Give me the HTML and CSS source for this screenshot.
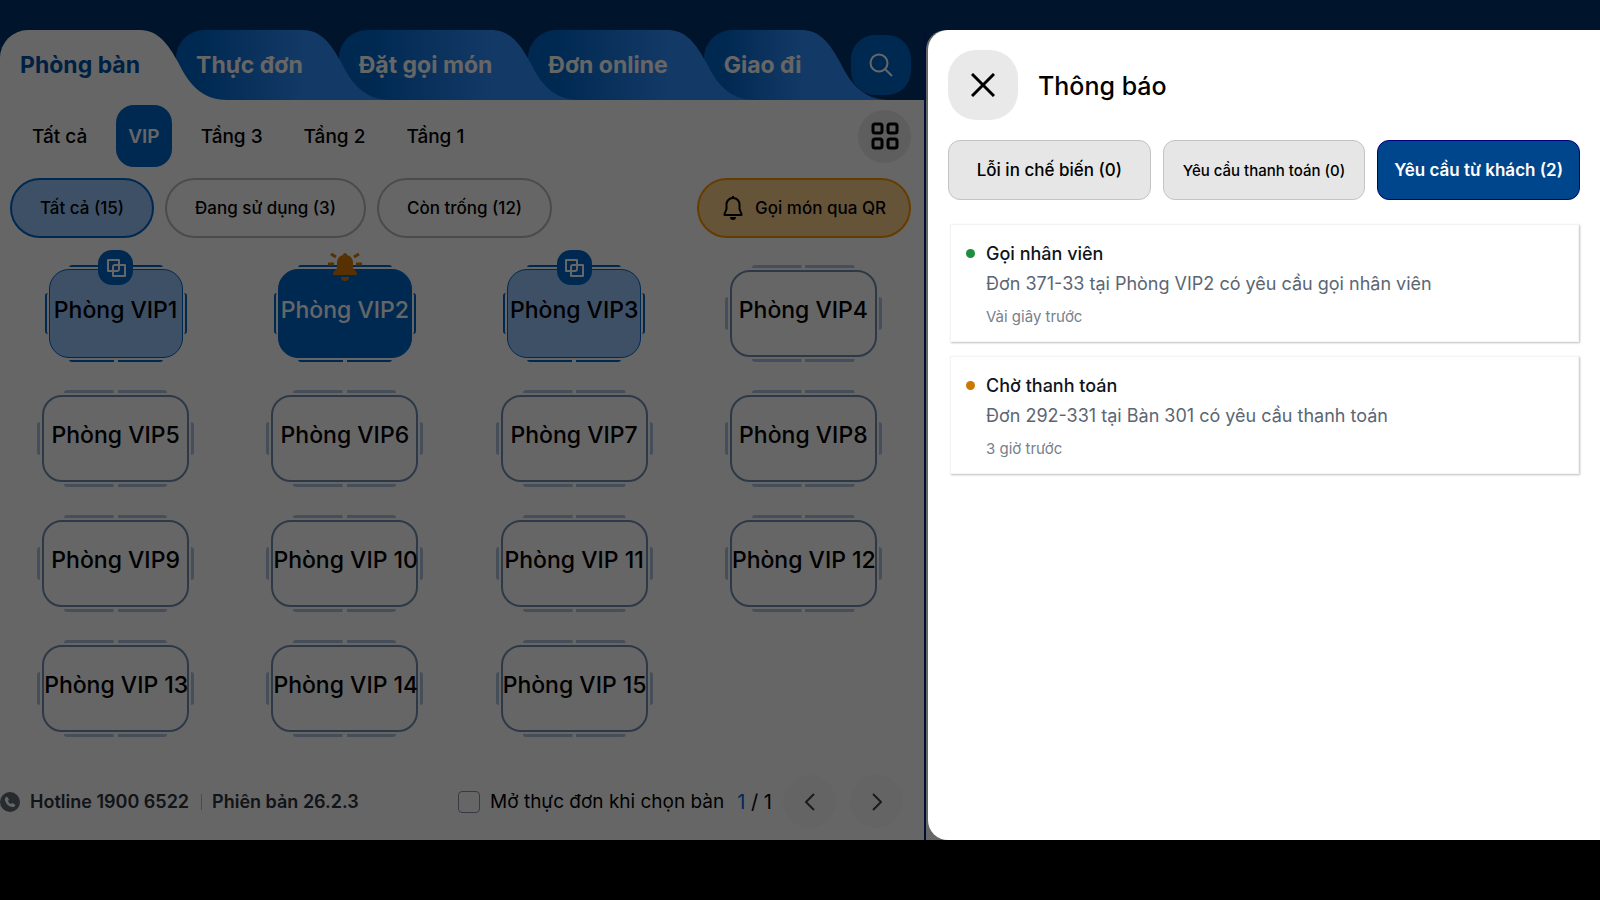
FILE: index.html
```html
<!DOCTYPE html>
<html lang="vi">
  <head>
    <meta charset="utf-8">
    <title>Phòng bàn</title>
    <link rel="stylesheet" href="styles.css">
  </head>
  <body>
    <svg class="symbols" aria-hidden="true">
      <symbol id="tail" viewBox="0 0 88 70">
        <path d="M0 0C18 0 28 14 38 32C48 52 60 70 88 70H0Z"/>
      </symbol>
      <symbol id="merge" viewBox="0 0 20 20">
        <path d="M13 7V2H2v11h5M8 7h11v11H7v-5h4a2 2 0 0 0 2-2V7M7 13V9a2 2 0 0 1 2-2" fill="none" stroke="currentColor" stroke-width="2" stroke-linejoin="round"/>
      </symbol>
    </svg>

    <div class="app">
      <main class="left">
        <nav class="tabs">
          <button class="tab active"><span>Phòng bàn</span><svg><use href="#tail"/></svg></button>
          <button class="tab"><span>Thực đơn</span><svg><use href="#tail"/></svg></button>
          <button class="tab"><span>Đặt gọi món</span><svg><use href="#tail"/></svg></button>
          <button class="tab"><span>Đơn online</span><svg><use href="#tail"/></svg></button>
          <button class="tab"><span>Giao đi</span><svg><use href="#tail"/></svg></button>
          <button class="search" aria-label="Tìm kiếm">
            <svg width="24" height="24" viewBox="0 0 24 24" fill="none" stroke="#fff" stroke-width="2">
              <circle cx="10" cy="10" r="8.500"/>
              <path d="M16 16l7 7"/>
            </svg>
          </button>
        </nav>

        <div class="content">
          <div class="areas">
            <button class="area">Tất cả</button>
            <button class="area active">VIP</button>
            <button class="area">Tầng 3</button>
            <button class="area">Tầng 2</button>
            <button class="area">Tầng 1</button>
            <button class="round view" aria-label="Kiểu hiển thị">
              <svg width="28" height="28" viewBox="0 0 28 28" fill="none" stroke="#000" stroke-width="3">
                <rect x="2" y="2" width="9" height="9" rx="2"/>
                <rect x="17" y="2" width="9" height="9" rx="2"/>
                <rect x="2" y="17" width="9" height="9" rx="2"/>
                <rect x="17" y="17" width="9" height="9" rx="2"/>
              </svg>
            </button>
          </div>

          <div class="filters">
            <button class="filter active">Tất cả (15)</button>
            <button class="filter">Đang sử dụng (3)</button>
            <button class="filter">Còn trống (12)</button>
            <button class="filter qr">
              <svg width="20" height="24" viewBox="0 0 20 24" fill="none" stroke="#000" stroke-width="2" stroke-linejoin="round">
                <path d="M10 2c-4 0-6.500 3-6.500 6.500V13L1.500 18v1h17v-1l-2-5V8.500C16.500 5 14 2 10 2z"/>
                <path d="M10 0v2"/>
                <path d="M7 21h6a3 3 0 0 1-6 0z" fill="#000" stroke="none"/>
              </svg>
              Gọi món qua QR
            </button>
          </div>

          <div class="tables">
            <button class="table busy"><i class="seats"></i><span class="name">Phòng VIP1</span><i class="badge"><svg width="20" height="20"><use href="#merge"/></svg></i></button>
            <button class="table busy calling"><i class="seats"></i><span class="name">Phòng VIP2</span>
              <svg class="bell" width="34" height="28" viewBox="0 0 34 28" fill="#d97b06">
                <path d="M17 0a2 2 0 0 1 2 2c4 1 6 4 6 8v5l4 5v2H5v-2l4-5v-5c0-4 2-7 6-8a2 2 0 0 1 2-2z"/>
                <path d="M13 24h8a4 4 0 0 1-8 0z"/>
                <path d="M3 1l5 3M31 1l-5 3M0 11h6M34 11h-6" stroke="#d97b06" stroke-width="3"/>
              </svg>
            </button>
            <button class="table busy"><i class="seats"></i><span class="name">Phòng VIP3</span><i class="badge"><svg width="20" height="20"><use href="#merge"/></svg></i></button>
            <button class="table"><i class="seats"></i><span class="name">Phòng VIP4</span></button>
            <button class="table"><i class="seats"></i><span class="name">Phòng VIP5</span></button>
            <button class="table"><i class="seats"></i><span class="name">Phòng VIP6</span></button>
            <button class="table"><i class="seats"></i><span class="name">Phòng VIP7</span></button>
            <button class="table"><i class="seats"></i><span class="name">Phòng VIP8</span></button>
            <button class="table"><i class="seats"></i><span class="name">Phòng VIP9</span></button>
            <button class="table"><i class="seats"></i><span class="name">Phòng VIP 10</span></button>
            <button class="table"><i class="seats"></i><span class="name">Phòng VIP 11</span></button>
            <button class="table"><i class="seats"></i><span class="name">Phòng VIP 12</span></button>
            <button class="table"><i class="seats"></i><span class="name">Phòng VIP 13</span></button>
            <button class="table"><i class="seats"></i><span class="name">Phòng VIP 14</span></button>
            <button class="table"><i class="seats"></i><span class="name">Phòng VIP 15</span></button>
          </div>

          <footer class="footer">
            <svg width="20" height="20" viewBox="0 0 20 20">
              <circle cx="10" cy="10" r="10" fill="#5f6b76"/>
              <path d="M5 6l2-1.500 2 3-1 1.500c.6 1.400 1.600 2.400 3 3l1.500-1 3 2-1.500 2c-5 1-10-5-9-9z" fill="#fff"/>
            </svg>
            <span class="info">Hotline 1900 6522</span>
            <span class="line"></span>
            <span class="info">Phiên bản 26.2.3</span>
            <label class="open-menu"><input type="checkbox"> Mở thực đơn khi chọn bàn</label>
            <span class="page"><b>1</b> / 1</span>
            <button class="round" aria-label="Trang trước">
              <svg width="10" height="18" viewBox="0 0 10 18"><path d="M9 1L1 9l8 8"/></svg>
            </button>
            <button class="round" aria-label="Trang sau">
              <svg width="10" height="18" viewBox="0 0 10 18"><path d="M1 1l8 8-8 8"/></svg>
            </button>
          </footer>
        </div>
      </main>
      <section class="order"></section>

      <div class="overlay"></div>

      <aside class="drawer">
        <header class="drawer-head">
          <button class="close" aria-label="Đóng">
            <svg width="24" height="24" viewBox="0 0 24 24" stroke="#000" stroke-width="3"><path d="M1 1l22 22M23 1L1 23"/></svg>
          </button>
          <h1>Thông báo</h1>
        </header>
        <div class="kinds">
          <button class="kind">Lỗi in chế biến (0)</button>
          <button class="kind small">Yêu cầu thanh toán (0)</button>
          <button class="kind active">Yêu cầu từ khách (2)</button>
        </div>
        <div class="notices">
          <article class="notice">
            <i class="dot green"></i>
            <div>
              <h2>Gọi nhân viên</h2>
              <p>Đơn 371-33 tại Phòng VIP2 có yêu cầu gọi nhân viên</p>
              <time>Vài giây trước</time>
            </div>
          </article>
          <article class="notice">
            <i class="dot orange"></i>
            <div>
              <h2>Chờ thanh toán</h2>
              <p>Đơn 292-331 tại Bàn 301 có yêu cầu thanh toán</p>
              <time>3 giờ trước</time>
            </div>
          </article>
        </div>
      </aside>
    </div>
  </body>
</html>
```

FILE: styles.css
```css
* {box-sizing: border-box;}
body {margin: 0; background: #000; font-family: Inter, "Noto Sans", sans-serif; color: #000;}
button {margin: 0; padding: 0; border: 0; background: none; font: inherit; color: inherit;}
h1, h2, p {margin: 0;}
.symbols {position: absolute; width: 0; height: 0;}

.app {
  position: relative;
  display: flex;
  min-height: calc(100vh - 60px);
  padding-top: 30px;
  background: #00326b;
}
.left {
  isolation: isolate;
  flex: 1;
  display: flex;
  flex-direction: column;
  border-right: 2px solid #002680;
}
.order {width: calc(42% + 2px); background: #fff; border-radius: 20px 0 0 0;}
.overlay {position: absolute; inset: 0; background: rgba(0, 0, 0, 0.6);}

/* top tabs */
.tabs {display: flex; align-items: center; height: 70px; padding-right: 13px;}
.tab {
  position: relative;
  display: flex;
  height: 70px;
  margin-right: -52px;
  font-size: 23px;
  font-weight: 700;
  line-height: 70px;
  color: #fff;
  white-space: nowrap;
}
.tab span {
  padding-left: 20px;
  border-radius: 28px 0 0 0;
  background: linear-gradient(90deg, #0066cc 20%, #3091ff);
}
.tab svg {width: 88px; height: 70px; fill: #3091ff;}
.tab.active {color: #0050a8;}
.tab.active span {background: #fff;}
.tab.active svg {fill: #fff;}
.tab:nth-child(1) {z-index: 5;}
.tab:nth-child(2) {z-index: 4;}
.tab:nth-child(3) {z-index: 3;}
.tab:nth-child(4) {z-index: 2;}
.tab:nth-child(5) {z-index: 1;}
.search {
  display: grid;
  place-items: center;
  width: 60px;
  height: 60px;
  margin-left: auto;
  border-radius: 24px;
  background: #0066cc;
}

.content {flex: 1; display: flex; flex-direction: column; background: #fff;}
.round {
  display: grid;
  place-items: center;
  width: 53px;
  height: 53px;
  border-radius: 50%;
  background: #fafafa;
}
.areas {display: flex; align-items: center; gap: 17px; padding: 5px 13px 0 20px;}
.area {height: 62px; padding: 0 12px; border-radius: 18px; font-size: 19px; font-weight: 500;}
.area.active {background: #0066cc; color: #fff; font-weight: 600;}
.view {margin-left: auto; background: #ebebeb;}

.filters {display: flex; gap: 11px; padding: 11px 13px 0 10px;}
.filter {
  display: flex;
  align-items: center;
  gap: 12px;
  height: 60px;
  padding: 0 28px;
  border: 2px solid #bbb;
  border-radius: 30px;
  font-size: 17px;
  font-weight: 500;
}
.filter.active {border-color: #0066cc; background: #9bc8ff;}
.filter.qr {margin-left: auto; padding: 0 23px 0 24px; border-color: #ff9500; background: #ffd28f;}

/* room grid */
.tables {display: grid; grid-template-columns: repeat(4, 1fr); grid-auto-rows: 125px; padding: 13px 6px 0 1px;}
.table {
  position: relative;
  display: grid;
  place-items: center;
  place-self: center;
  width: 147px;
  height: 87px;
  border: 2px solid #7390b5;
  border-radius: 20px;
  font-size: 23px;
  font-weight: 500;
  white-space: nowrap;
}
.name {line-height: 32px; padding-bottom: 8px;}
.seats {position: absolute; inset: -7px; pointer-events: none;}
.seats::before, .seats::after {content: ""; position: absolute;}
.seats::before {
  inset: 0 27px;
  background:
    linear-gradient(#b0c4de, #b0c4de) 0 0 / calc(50% - 2px) 3px,
    linear-gradient(#b0c4de, #b0c4de) 100% 0 / calc(50% - 2px) 3px,
    linear-gradient(#b0c4de, #b0c4de) 0 100% / calc(50% - 2px) 3px,
    linear-gradient(#b0c4de, #b0c4de) 100% 100% / calc(50% - 2px) 3px;
  background-repeat: no-repeat;
  border-radius: 3px;
}
.seats::after {inset: 32px 0; border: solid #b0c4de; border-width: 0 3px; border-radius: 3px;}
.busy {width: 134px; height: 89px; border: 1px solid #0066cc; background: #9bc8ff;}
.busy .seats {inset: -5px;}
.busy .seats::before {
  inset: 0 24px;
  background:
    linear-gradient(#0066cc, #0066cc) 0 0 / calc(50% - 2px) 2px,
    linear-gradient(#0066cc, #0066cc) 100% 0 / calc(50% - 2px) 2px,
    linear-gradient(#0066cc, #0066cc) 0 100% / calc(50% - 2px) 2px,
    linear-gradient(#0066cc, #0066cc) 100% 100% / calc(50% - 2px) 2px;
  background-repeat: no-repeat;
}
.busy .seats::after {inset: 28px 0; border-color: #0066cc; border-width: 0 2px;}
.calling {background: #0066cc; color: #fff;}
.badge {
  position: absolute;
  top: -20px;
  display: grid;
  place-items: center;
  width: 35px;
  height: 35px;
  border-radius: 14px;
  background: #0066cc;
  color: #fff;
}
.bell {position: absolute; top: -17px;}

.footer {display: flex; align-items: center; margin-top: auto; padding: 0 21px 12px 0;}
.info {margin-left: 10px; font-size: 18px; font-weight: 600; color: #2b333c;}
.line {width: 1px; height: 16px; margin-left: 12px; background: #bbb;}
.open-menu {display: flex; align-items: center; gap: 10px; margin-left: auto; font-size: 19px;}
.open-menu input {
  appearance: none;
  width: 22px;
  height: 22px;
  margin: 0;
  border: 1px solid #8b95a3;
  border-radius: 4px;
}
.page {margin-left: 13px; font-size: 20px;}
.page b {font-weight: 400; color: #0066e0;}
.footer .round {margin-left: 14px;}
.footer .page + .round {margin-left: 11px;}
.footer .round svg {fill: none; stroke: #444; stroke-width: 2;}

/* notification drawer */
.drawer {
  position: absolute;
  top: 30px;
  right: 0;
  bottom: 0;
  width: 42%;
  padding: 20px;
  border-radius: 20px 0 0 20px;
  background: #fff;
}
.drawer-head {display: flex; align-items: center; gap: 20px;}
.drawer-head h1 {padding-top: 2px; font-size: 25px; font-weight: 500;}
.close {display: grid; place-items: center; width: 70px; height: 70px; border-radius: 28px; background: #e9e9e9;}
.kinds {display: grid; grid-template-columns: repeat(3, 1fr); gap: 12px; margin-top: 20px;}
.kind {
  height: 60px;
  border: 1px solid #c4c4c4;
  border-radius: 12px;
  background: #e6e6e6;
  font-size: 17px;
  font-weight: 500;
  white-space: nowrap;
}
.kind.small {font-size: 15px;}
.kind.active {border-color: #000080; background: #00468c; color: #fff; font-weight: 600;}
.notices {display: grid; gap: 14px; margin-top: 24px; padding: 0 1px 0 2px;}
.notice {
  display: flex;
  gap: 11px;
  padding: 17px 15px 14px;
  border: 1px solid #f3f3f3;
  box-shadow: 1px 1px 2px rgba(0, 0, 0, 0.25);
}
.dot {width: 9px; height: 9px; margin-top: 7px; border-radius: 50%;}
.green {background: #1e8e3e;}
.orange {background: #cc7700;}
.notice h2 {font-size: 18px; font-weight: 500; line-height: 24px; color: #10151c;}
.notice p {margin-top: 4px; font-size: 18px; line-height: 28px; color: #5b6673;}
.notice time {display: block; margin-top: 8px; font-size: 15px; line-height: 21px; color: #77808b;}
```
